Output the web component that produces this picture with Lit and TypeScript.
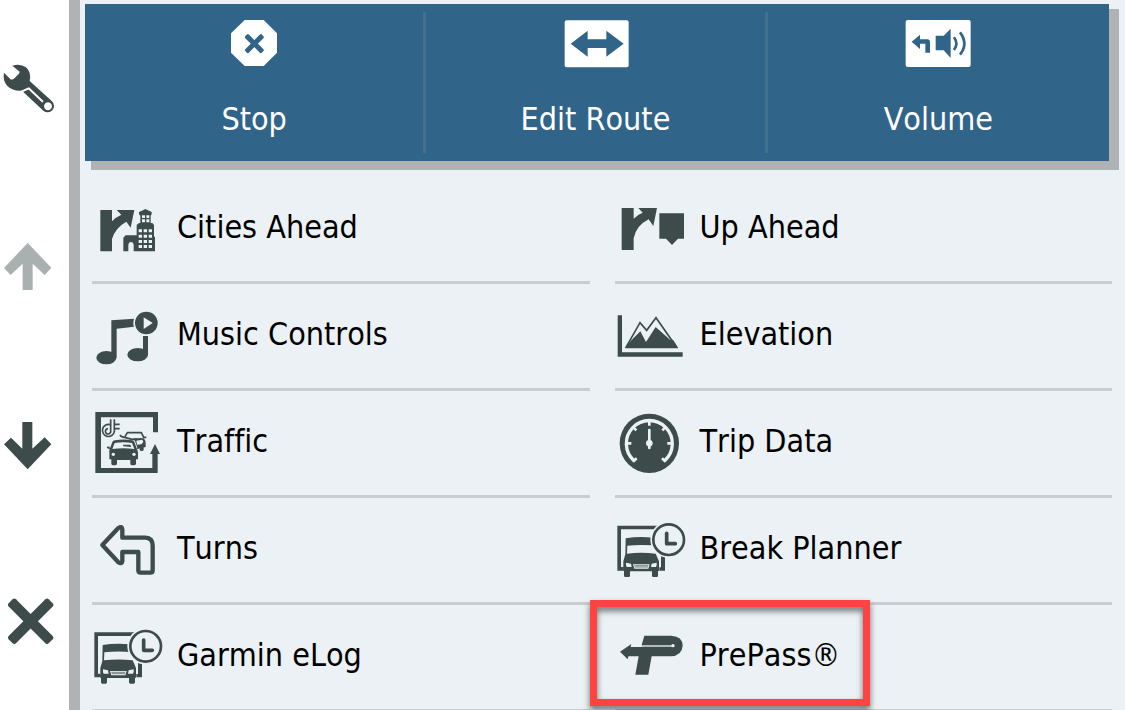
import { LitElement, html, svg, css } from "lit";
import { customElement } from "lit/decorators.js";

const cross = (cx: number, cy: number, half: number, thick: number, r: number) => svg`
  <rect x=${cx - half} y=${cy - thick / 2} width=${half * 2} height=${thick} rx=${r} transform="rotate(45 ${cx} ${cy})"/>
  <rect x=${cx - half} y=${cy - thick / 2} width=${half * 2} height=${thick} rx=${r} transform="rotate(-45 ${cx} ${cy})"/>`;

const truckClock = svg`
  <path d="M43 127H162V138H54V251H62V262H43Z M174 215H186V262H169V252H174Z"/>
  <path d="M68 165Q108 158 150 163L152 186Q108 183 73 187L72 211Q115 206 158 211L168 234V263H165V277Q165 281 161 281H151Q147 281 147 277V264H81V277Q81 281 77 281H67Q63 281 63 277V263H61V234L67 213Z"/>
  <path class="cut" d="M69 238L84 241L86 251H71Q68 246 69 238Z M161 238L146 241L144 251H159Q162 246 161 238Z M90 243H140L136 256H94Z"/>
  <path class="line" stroke-width="2" d="M94 247H136M95 251H135"/>
  <circle class="cut" cx="197" cy="169" r="55"/>
  <circle class="line" cx="197" cy="169" r="46" stroke-width="8"/>
  <path class="line" stroke-width="11" stroke-linecap="round" stroke-linejoin="round" d="M191 150V181H217"/>`;

const tools = [
  { label: "Settings", box: "0 63 207 168", art: svg`
    <path fill-rule="evenodd" d="M37 77Q60 69 78 82Q95 98 89 123L156 184A19 19 0 1 1 130 212L66 152Q40 155 22 138Q7 120 12 98L33 119L41 117L57 101L59 95ZM144 187A12 12 0 1 0 144.100 187Z"/>
    <path stroke="#fff" fill="none" stroke-width="6" stroke-linejoin="round" stroke-linecap="round" d="M64 155L86 145L127 184"/>` },
  { label: "Page up", dim: true, box: "0 594 207 168", art: svg`<path d="M83 609L154 683L134 705L98 671V750H68V671L32 705L12 684Z"/>` },
  { label: "Page down", box: "0 47 207 168", art: svg`<path d="M67 65H97V145L134 111L154 132L83 207L12 132L33 112L67 145Z"/>` },
  { label: "Close", box: "0 580 207 168", art: cross(92, 665, 85, 31, 7) },
];

const actions = [
  { label: "Stop", box: "414 54 216 150", art: svg`
    <path d="M494 60H551L591 100V158L551 198H494L453 158V100Z"/>
    <g class="ink">${cross(523, 131, 35, 15, 4)}</g>` },
  { label: "Edit Route", box: "178 54 216 150", art: svg`
    <rect x="195" y="61" width="192" height="141" rx="6"/>
    <path class="ink" d="M213 131L264 92V118H320V92L372 131L320 170V144H264V170Z"/>` },
  { label: "Volume", box: "127 54 216 150", art: svg`
    <rect x="138" y="60" width="195" height="141" rx="6"/>
    <path class="ink" d="M156 125L181 104V118H203Q211 118 211 126V158H197V131H181V147ZM228 107H252L273 86V174L252 151H228Z"/>
    <path class="wave" d="M283 112Q297 131 283 150M301 97Q327 131 301 164"/>` },
];

const items = [
  { label: "Cities Ahead", box: "36 -54 216 312", art: svg`
    <path d="M61 45H96V79Q108 66 124 59L110 45H163L152 98L139 80Q106 98 96 132V169H61Z"/>
    <path d="M130 169V128L137 121H170V90L177 84H181V62L177 58V51L189 46L196 42L204 46L215 51V58L212 62V84H217L222 90V125H225V169H161V150Q160 141 153 141Q146 141 145 150V169Z"/>
    <path class="cut" d="M186 61h9v8h-9zM199 61h9v8h-9zM186 73h9v9h-9zM199 73h9v9h-9zM176 103h10v9h-10zM191 103h10v9h-10zM206 103h10v9h-10zM176 119h10v9h-10zM191 119h10v9h-10zM206 119h10v9h-10zM176 135h10v9h-10zM191 135h10v9h-10zM206 135h10v9h-10zM176 150h10v9h-10zM191 150h10v9h-10zM206 150h10v9h-10z"/>` },
  { label: "Up Ahead", box: "45 -54 216 312", art: svg`
    <path d="M65 39H101V71Q112 59 128 53L115 39H171L160 93L146 73Q108 92 101 130V165H65ZM178 55H252V131H234L216 150L198 131H178Z"/>` },
  { label: "Music Controls", box: "36 267 216 312", art: svg`
    <path d="M94 376L163 371V395L110 401V488H94Z"/>
    <path d="M189 423H204V481H189Z"/>
    <ellipse cx="79" cy="488" rx="30" ry="20"/><ellipse cx="173" cy="479" rx="31" ry="20"/>
    <circle class="cut" cx="199" cy="384" r="39"/><circle cx="199" cy="384" r="34"/>
    <path class="cut" d="M191 367V402L218 384Z"/>` },
  { label: "Elevation", box: "45 267 216 312", art: svg`
    <path d="M53 361H66V472H248V485H53Z"/>
    <path d="M74 460L94 436L121 409L138 441L167 396L211 435L219 434L235 460Z"/>
    <path class="line" stroke-width="5" d="M78 457L120 383L140 406L168 368L230 457"/>` },
  { label: "Traffic", box: "36 -27 216 312", art: svg`
    <path d="M219 97V52H63V204H217V162H210L225 132L240 162H233V219H46V36H234V97Z"/>
    <path class="line" stroke-width="5" d="M92 58V92A8 8 0 1 1 84 86M90 74A18 18 0 1 0 103 95V58M104 73H119M104 86H119"/>
    <path class="line" stroke-width="5" stroke-linejoin="round" d="M120 105Q124 112 134 112L142 98H184L191 112H199M134 112L156 118H190"/>
    <path d="M160 115H190Q197 119 197 128V142H191V149Q191 153 185 153Q179 153 179 149V143H172L165 123Z"/>
    <path class="cut" d="M169 122L187 119L190 126L184 133L171 134Z"/>
    <path d="M89 148L97 126Q99 121 105 121Q130 116 156 121Q161 121 163 126L171 148Q174 152 174 160V178H168V191Q168 196 160 196Q151 196 151 191V180H111V191Q111 196 103 196Q94 196 94 191V178H88V160Q87 152 89 148ZM80 141Q82 138 89 140L90 147Q82 148 80 141ZM182 141Q180 138 172 140L171 147Q180 148 182 141Z"/>
    <path class="cut" d="M104 129Q130 125 156 129L163 147Q130 142 97 147Z"/>
    <circle class="cut" cx="100" cy="163" r="5"/><circle class="cut" cx="162" cy="163" r="5"/>
    <path d="M129 134H151L154 141L130 139Z"/>` },
  { label: "Trip Data", box: "45 -27 216 312", art: svg`
    <circle cx="148" cy="130" r="89"/>
    <path class="gap" stroke-width="10" d="M102 182A69 69 0 1 1 194 182"/>
    <path class="gap" stroke-width="8" d="M148 64V77M82 130H94M202 130H214M101 83L109 91M195 83L187 91M99 185L110 175M197 185L186 175"/>
    <path class="gap" stroke-width="8" stroke-linecap="round" d="M148 90V144"/>
    <circle class="cut" cx="148" cy="130" r="10"/>` },
  { label: "Turns", box: "36 294 216 312", art: svg`
    <path class="line" stroke-width="13" stroke-linejoin="round" d="M67 435L115 384Q126 377 127 388V413H196Q218 414 218 436V511Q218 518 211 518H182Q175 518 175 511V456H127V484Q126 493 115 487Z"/>` },
  { label: "Break Planner", box: "36 44 216 312", art: truckClock },
  { label: "Garmin eLog", box: "36 45 216 312", art: truckClock },
  { label: "PrePass®", marked: true, box: "105 45 216 312", art: svg`
    <path d="M193 137H274Q308 139 308 167Q306 197 272 199H215L205 254H166L176 199H145L143 208L120 185L154 162L152 171H186L185 165Z"/>
    <path class="gap" stroke-width="4" d="M180 168H276"/><circle class="cut" cx="279" cy="167" r="5"/>` },
];

@customElement("app-root")
export class AppRoot extends LitElement {
  static styles = css`
    :host {
      display: flex;
      height: 100vh;
      overflow: hidden;
      background: #ebf1f4;
      color: #000;
      font: 32px/40px "DejaVu Sans Condensed", "DejaVu Sans", sans-serif;
      font-stretch: condensed;
      font-kerning: none;
      font-variant-ligatures: none;
    }
    *, *::after { box-sizing: border-box; }
    button {
      margin: 0;
      padding: 0;
      border: 0;
      background: none;
      color: inherit;
      font: inherit;
      font-kerning: inherit;
      font-variant-ligatures: inherit;
      cursor: pointer;
    }
    svg { display: block; flex: none; fill: currentColor; }
    .side {
      display: flex;
      flex-direction: column;
      flex: none;
      width: 80px;
      background: #fff;
      border-right: 11px solid #afb3b6;
      color: #3d4b4b;
    }
    .tool { flex: 1; display: flex; align-items: center; }
    .tool svg { width: 69px; height: 56px; }
    .dim { color: #a9b0b0; }
    .main { flex: 1; min-width: 0; padding: 4px 13px 0 5px; }
    .actions {
      display: grid;
      grid-template-columns: repeat(3, 1fr);
      margin-right: 3px;
      padding: 8px 0;
      background: #306489;
      color: #fff;
      box-shadow: 8px 7px 0 2px #afb3b6;
    }
    .action {
      display: flex;
      flex-direction: column;
      align-items: center;
      gap: 31px;
      padding: 6px 0 14px;
      border-right: 3px solid #41718f;
    }
    .action:last-child { border-right: 0; }
    .action svg { width: 72px; height: 50px; }
    .ink { fill: #306489; }
    .wave { fill: none; stroke: #306489; stroke-width: 8px; }
    .list {
      display: grid;
      grid-template-columns: repeat(2, 1fr);
      column-gap: 25px;
      margin: 16px 0 0 7px;
      padding: 0;
      list-style: none;
    }
    .cell { position: relative; border-bottom: 3px solid #c9cdd0; }
    .item {
      display: flex;
      align-items: center;
      gap: 13px;
      width: 100%;
      text-align: left;
      white-space: nowrap;
    }
    .item svg { width: 72px; height: 104px; color: #3d4b4b; }
    .text { padding-bottom: 4px; }
    .cut { fill: #ebf1f4; }
    .line { fill: none; stroke: currentColor; }
    .gap { fill: none; stroke: #ebf1f4; }
    .marked::after {
      content: "";
      position: absolute;
      left: -25px;
      top: -5px;
      width: 280px;
      height: 106px;
      border: 7px solid #ff4343;
      filter: drop-shadow(0 4px 3px rgba(0, 0, 0, 0.55));
      pointer-events: none;
    }
  `;

  render() {
    return html`
      <nav class="side" aria-label="Navigation">
        ${tools.map((t) => html`
          <button class="tool ${t.dim ? "dim" : ""}" aria-label=${t.label}>
            <svg viewBox=${t.box} aria-hidden="true">${t.art}</svg>
          </button>`)}
      </nav>
      <main class="main">
        <div class="actions">
          ${actions.map((a) => html`
            <button class="action">
              <svg viewBox=${a.box} aria-hidden="true">${a.art}</svg>
              <span>${a.label}</span>
            </button>`)}
        </div>
        <ul class="list">
          ${items.map((i) => html`
            <li class="cell ${i.marked ? "marked" : ""}">
              <button class="item">
                <svg viewBox=${i.box} aria-hidden="true">${i.art}</svg>
                <span class="text">${i.label}</span>
              </button>
            </li>`)}
        </ul>
      </main>`;
  }
}
